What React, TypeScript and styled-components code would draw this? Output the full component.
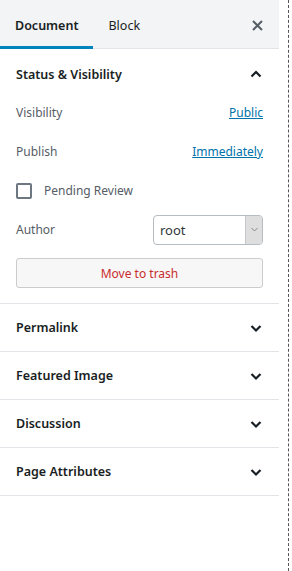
import styled, { createGlobalStyle } from "styled-components";

const GlobalStyle = createGlobalStyle`
  html, body {
    margin: 0;
    padding: 0;
    background: #fff;
  }
  body {
    font-family: "Noto Sans", "Open Sans", sans-serif;
    font-size: 12px;
    color: #191e23;
  }
`;

const Page = styled.div`
  display: flex;
  width: 292px;
  height: 571px;
`;

const Sidebar = styled.div`
  width: 279px;
  display: flex;
  flex-direction: column;
`;

const Edge = styled.div`
  width: 9px;
  border-right: 1px dashed #555;
`;

const Header = styled.div`
  display: flex;
  align-items: stretch;
  height: 49px;
  background: #f3f4f5;
  border-bottom: 1px solid #e2e4e7;
  box-sizing: border-box;
  font-size: 12.5px;
`;

const Tab = styled.div<{ $active?: boolean }>`
  display: flex;
  align-items: center;
  padding: 4px 15px 0;
  margin-bottom: -1px;
  font-weight: ${(p) => (p.$active ? 600 : 400)};
  border-bottom: 3px solid ${(p) => (p.$active ? "#0085ba" : "transparent")};
  box-sizing: border-box;
`;

const HeaderSpacer = styled.div`
  flex: 1;
`;

const CloseButton = styled.div`
  display: flex;
  align-items: center;
  justify-content: center;
  width: 44px;
  padding-top: 2px;
`;

const Panel = styled.div`
  border-bottom: 1px solid #e2e4e7;
`;

const PanelTitle = styled.div<{ $open?: boolean }>`
  display: flex;
  align-items: center;
  justify-content: space-between;
  height: ${(p) => (p.$open ? "44px" : "47px")};
  padding: ${(p) => (p.$open ? "6px" : "0")} 16px 0 16px;
  box-sizing: border-box;
  font-weight: 600;
  font-size: 12.5px;
`;

const PanelBody = styled.div`
  display: flex;
  flex-direction: column;
  padding: 0 16px 15px;
`;

const Row = styled.div`
  display: flex;
  align-items: center;
  justify-content: space-between;
  height: 39px;
  color: #555d66;
`;

const Link = styled.a`
  color: #0073aa;
  text-decoration: underline;
  cursor: pointer;
`;

const CheckRow = styled.label`
  display: flex;
  align-items: center;
  gap: 12px;
  height: 39px;
  color: #555d66;
`;

const Checkbox = styled.span`
  width: 16px;
  height: 16px;
  border: 2px solid #6c7781;
  border-radius: 2px;
  box-sizing: border-box;
`;

const Select = styled.div`
  display: flex;
  width: 110px;
  height: 30px;
  border: 1px solid #b5bcc2;
  border-radius: 4px;
  box-sizing: border-box;
  overflow: hidden;
  color: #32373c;
`;

const SelectValue = styled.div`
  flex: 1;
  display: flex;
  align-items: center;
  padding-left: 6px;
  font-size: 13px;
`;

const SelectArrow = styled.div`
  width: 16px;
  display: flex;
  align-items: center;
  justify-content: center;
  background: #dedede;
  border-left: 1px solid #c4c8cc;
`;

const TrashButton = styled.button`
  margin-top: 9px;
  height: 30px;
  width: 100%;
  background: #f7f7f7;
  border: 1px solid #ccc;
  border-radius: 3px;
  color: #c92c2c;
  font-family: inherit;
  font-size: 12px;
`;

const Chevron = ({ up }: { up?: boolean }) => (
  <svg width="14" height="14" viewBox="0 0 14 14">
    <path
      d={up ? "M2.5 9.5 L7 5 L11.5 9.5" : "M2.5 5 L7 9.5 L11.5 5"}
      fill="none"
      stroke="#191e23"
      strokeWidth="2.2"
    />
  </svg>
);

const collapsed = ["Permalink", "Featured Image", "Discussion", "Page Attributes"];

export default function App() {
  return (
    <Page>
      <GlobalStyle />
      <Sidebar>
        <Header>
          <Tab $active>Document</Tab>
          <Tab>Block</Tab>
          <HeaderSpacer />
          <CloseButton>
            <svg width="11" height="11" viewBox="0 0 11 11">
              <path d="M1 1 L10 10 M10 1 L1 10" stroke="#555d66" strokeWidth="2" />
            </svg>
          </CloseButton>
        </Header>
        <Panel>
          <PanelTitle $open>
            Status &amp; Visibility
            <Chevron up />
          </PanelTitle>
          <PanelBody>
            <Row>
              <span>Visibility</span>
              <Link>Public</Link>
            </Row>
            <Row>
              <span>Publish</span>
              <Link>Immediately</Link>
            </Row>
            <CheckRow>
              <Checkbox />
              Pending Review
            </CheckRow>
            <Row>
              <span>Author</span>
              <Select>
                <SelectValue>root</SelectValue>
                <SelectArrow>
                  <svg width="7" height="5" viewBox="0 0 7 5">
                    <path d="M0.5 1 L3.5 4 L6.5 1" fill="none" stroke="#888" strokeWidth="1" />
                  </svg>
                </SelectArrow>
              </Select>
            </Row>
            <TrashButton>Move to trash</TrashButton>
          </PanelBody>
        </Panel>
        {collapsed.map((title) => (
          <Panel key={title}>
            <PanelTitle>
              {title}
              <Chevron />
            </PanelTitle>
          </Panel>
        ))}
      </Sidebar>
      <Edge />
    </Page>
  );
}
